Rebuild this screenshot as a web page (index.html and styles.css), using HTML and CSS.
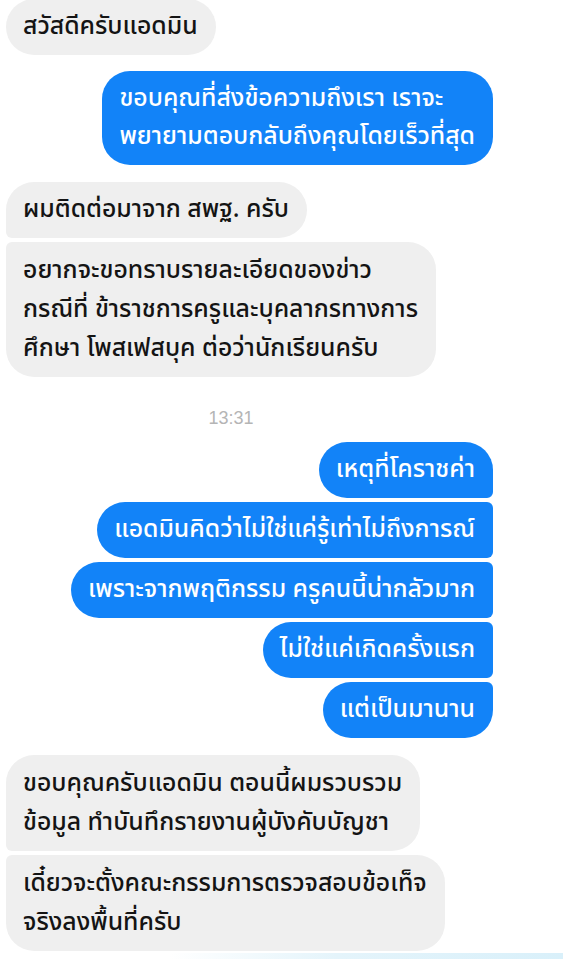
FILE: index.html
```html
<!DOCTYPE html>
<html lang="th">
<head>
<meta charset="utf-8">
<link rel="stylesheet" href="styles.css">
</head>
<body>
<div class="chat">
  <div class="row in first"><div class="bubble gray single">สวัสดีครับแอดมิน</div></div>
  <div class="row out gap16"><div class="bubble blue single">ขอบคุณที่ส่งข้อความถึงเรา เราจะ<br>พยายามตอบกลับถึงคุณโดยเร็วที่สุด</div></div>
  <div class="row in gap17"><div class="bubble gray top">ผมติดต่อมาจาก สพฐ. ครับ</div></div>
  <div class="row in gap4"><div class="bubble gray bottom tall">อยากจะขอทราบรายละเอียดของข่าว<br>กรณีที่ ข้าราชการครูและบุคลากรทางการ<br>ศึกษา โพสเฟสบุค ต่อว่านักเรียนครับ</div></div>
  <div class="stamp">13:31</div>
  <div class="row out"><div class="bubble blue top">เหตุที่โคราชค่า</div></div>
  <div class="row out gap4"><div class="bubble blue mid">แอดมินคิดว่าไม่ใช่แค่รู้เท่าไม่ถึงการณ์</div></div>
  <div class="row out gap4"><div class="bubble blue mid">เพราะจากพฤติกรรม ครูคนนี้น่ากลัวมาก</div></div>
  <div class="row out gap4"><div class="bubble blue mid">ไม่ใช่แค่เกิดครั้งแรก</div></div>
  <div class="row out gap4"><div class="bubble blue bottom">แต่เป็นมานาน</div></div>
  <div class="row in gap17"><div class="bubble gray top tall">ขอบคุณครับแอดมิน ตอนนี้ผมรวบรวม<br>ข้อมูล ทำบันทึกรายงานผู้บังคับบัญชา</div></div>
  <div class="row in gap4"><div class="bubble gray bottom tall">เดี๋ยวจะตั้งคณะกรรมการตรวจสอบข้อเท็จ<br>จริงลงพื้นที่ครับ</div></div>
  <div class="glow"></div>
</div>
</body>
</html>
```
FILE: styles.css
```css
html, body {
  margin: 0;
  padding: 0;
  background: #ffffff;
}
body {
  width: 563px;
  height: 959px;
  overflow: hidden;
  font-family: "Noto Sans Thai", "Noto Sans", "DejaVu Sans", sans-serif;
}
.chat {
  display: flex;
  flex-direction: column;
  padding: 0 70px 0 6px;
}
.row {
  display: flex;
}
.row.first { margin-top: -1px; }
.row.in { justify-content: flex-start; }
.row.out { justify-content: flex-end; }
.gap4 { margin-top: 4px; }
.gap16 { margin-top: 16px; }
.gap17 { margin-top: 17px; }
.bubble {
  font-size: 24.8px;
  font-weight: 500;
  line-height: 38px;
  padding: 9px 18px 9px 17px;
  white-space: nowrap;
  border-radius: 28px;
}
.bubble.tall { line-height: 39px; }
.gray {
  background: #efefef;
  color: #141414;
}
.blue {
  background: #1283f8;
  color: #ffffff;
}
.gray.top { border-bottom-left-radius: 6px; }
.gray.bottom { border-top-left-radius: 6px; }
.blue.top { border-bottom-right-radius: 6px; }
.blue.mid { border-top-right-radius: 6px; border-bottom-right-radius: 6px; }
.blue.bottom { border-top-right-radius: 6px; }
.stamp {
  width: 450px;
  text-align: center;
  font-family: "Liberation Sans", Arial, sans-serif;
  font-size: 18px;
  line-height: 22px;
  color: #b5b5b5;
  margin: 30px 0 13px 0;
}
.glow {
  margin: 2px -70px 0 -6px;
  height: 8px;
  background: linear-gradient(to right, #ffffff 0%, #ffffff 30%, #e4f4fb 60%, #d9f0fa 100%);
}
```
